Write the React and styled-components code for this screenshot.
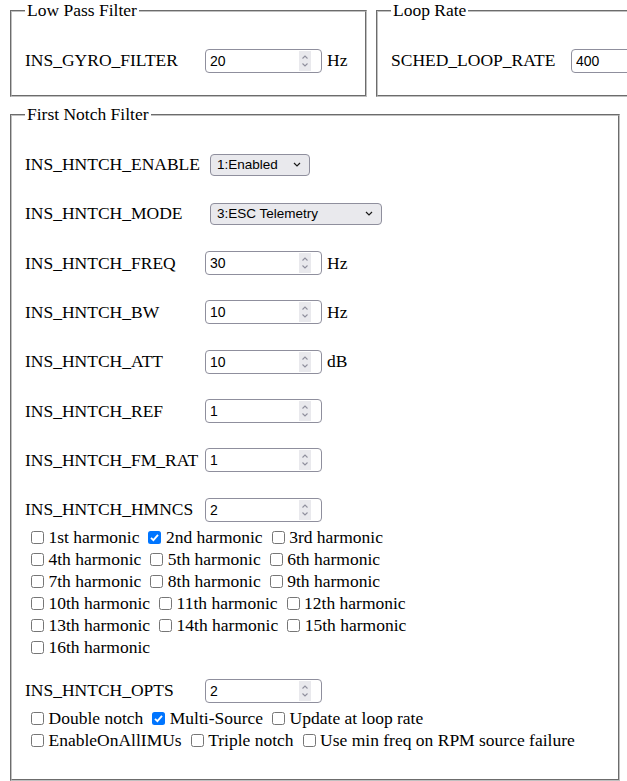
import React from "react"
import styled, { createGlobalStyle } from "styled-components"

const GlobalStyle = createGlobalStyle`
  html, body {
    margin: 0;
    padding: 0;
    background: #fff;
    overflow: hidden;
  }
  body {
    font-family: "Liberation Serif", "Times New Roman", serif;
    font-size: 17.5px;
    color: #000;
  }
`

const Page = styled.div`
  width: 627px;
  overflow: hidden;
  padding: 1px 0 0 8px;
  box-sizing: border-box;
`

const TopRow = styled.div`
  display: flex;
  gap: 5px;
  width: 900px;
`

const Group = styled.fieldset`
  box-sizing: border-box;
  width: ${p => p.$width}px;
  margin: ${p => p.$top || 0}px 2px 0;
  padding: 3px 12px ${p => p.$bottom}px 13px;
  border: 2px groove #c0c0c0;
  min-width: 0;
  flex: none;
`

const Legend = styled.legend`
  padding: 0 2px;
  line-height: 19.5px;
`

const Row = styled.div`
  display: flex;
  align-items: center;
  height: 24px;
  margin-top: ${p => p.$gap ?? 25.3}px;
  white-space: nowrap;
`

const Label = styled.span`
  width: 180px;
  flex: none;
`

const Unit = styled.span`
  margin-left: 5px;
`

const NumberBox = styled.div`
  display: flex;
  align-items: center;
  box-sizing: border-box;
  width: 117px;
  height: 24px;
  padding: 0 10px 0 4px;
  border: 1px solid #8f8f9d;
  border-radius: 4px;
  background: #fff;
  flex: none;
`

const NumberText = styled.input`
  flex: 1;
  min-width: 0;
  border: 0;
  outline: 0;
  padding: 0;
  background: transparent;
  color: #000;
  font: 14px "Liberation Sans", Arial, sans-serif;
`

const Spin = styled.span`
  display: flex;
  width: 12px;
  height: 20px;
  background: #e9e9ed;
  flex: none;
`

const SelectBox = styled.div`
  display: flex;
  align-items: center;
  justify-content: space-between;
  box-sizing: border-box;
  width: ${p => p.$width}px;
  height: 22px;
  margin-left: 5px;
  padding: 0 8px 0 6px;
  border: 1px solid #8f8f9d;
  border-radius: 4px;
  background: #e9e9ed;
  font: 13.5px "Liberation Sans", Arial, sans-serif;
  color: #000;
`

const CheckLine = styled.div`
  display: flex;
  align-items: center;
  height: 22px;
  padding-left: 6px;
  margin-top: ${p => p.$gap || 0}px;
  white-space: nowrap;
`

const CheckItem = styled.label`
  display: flex;
  align-items: center;
  gap: 4.5px;
  margin-right: 9px;
`

const Box = styled.span`
  display: flex;
  align-items: center;
  justify-content: center;
  box-sizing: border-box;
  width: 13px;
  height: 13px;
  border-radius: 2.5px;
  border: ${p => (p.$on ? "none" : "1px solid #767676")};
  background: ${p => (p.$on ? "#0075ff" : "#fff")};
`

function Spinner() {
  return (
    <Spin>
      <svg width="12" height="20" viewBox="0 0 12 20">
        <path d="M3.5 7.5 L6 5 L8.5 7.5" fill="none" stroke="#8f8f9d" strokeWidth="1.1" />
        <path d="M3.5 12.5 L6 15 L8.5 12.5" fill="none" stroke="#8f8f9d" strokeWidth="1.1" />
      </svg>
    </Spin>
  )
}

function NumberField({ value }) {
  return (
    <NumberBox>
      <NumberText type="text" defaultValue={value} />
      <Spinner />
    </NumberBox>
  )
}

function Select({ value, width }) {
  return (
    <SelectBox $width={width}>
      <span>{value}</span>
      <svg width="8" height="5" viewBox="0 0 8 5">
        <path d="M1 1 L4 4 L7 1" fill="none" stroke="#1a1a1a" strokeWidth="1.2" />
      </svg>
    </SelectBox>
  )
}

function Check({ on, children }) {
  return (
    <CheckItem>
      <Box $on={on}>
        {on && (
          <svg width="13" height="13" viewBox="0 0 13 13">
            <path d="M3 6.8 L5.4 9.2 L10 3.8" fill="none" stroke="#fff" strokeWidth="1.8" />
          </svg>
        )}
      </Box>
      <span>{children}</span>
    </CheckItem>
  )
}

const ordinal = n => {
  if (n % 100 >= 11 && n % 100 <= 13) return n + "th"
  return n + (["th", "st", "nd", "rd"][n % 10] || "th")
}

const harmonicLines = [[1, 2, 3], [4, 5, 6], [7, 8, 9], [10, 11, 12], [13, 14, 15], [16]]
const harmonicsOn = [2]

const optionLines = [
  [["Double notch", false], ["Multi-Source", true], ["Update at loop rate", false]],
  [["EnableOnAllIMUs", false], ["Triple notch", false], ["Use min freq on RPM source failure", false]],
]

const numberRows = [
  ["INS_HNTCH_FREQ", "30", "Hz"],
  ["INS_HNTCH_BW", "10", "Hz"],
  ["INS_HNTCH_ATT", "10", "dB"],
  ["INS_HNTCH_REF", "1"],
  ["INS_HNTCH_FM_RAT", "1"],
  ["INS_HNTCH_HMNCS", "2"],
]

export default function App() {
  return (
    <Page>
      <GlobalStyle />
      <TopRow>
        <Group $width={357} $bottom={22}>
          <Legend>Low Pass Filter</Legend>
          <Row>
            <Label>INS_GYRO_FILTER</Label>
            <NumberField value="20" />
            <Unit>Hz</Unit>
          </Row>
        </Group>
        <Group $width={357} $bottom={22}>
          <Legend>Loop Rate</Legend>
          <Row>
            <Label>SCHED_LOOP_RATE</Label>
            <NumberField value="400" />
          </Row>
        </Group>
      </TopRow>

      <Group $width={610} $top={8} $bottom={27}>
        <Legend>First Notch Filter</Legend>
        <Row>
          <Label>INS_HNTCH_ENABLE</Label>
          <Select value="1:Enabled" width={100} />
        </Row>
        <Row>
          <Label>INS_HNTCH_MODE</Label>
          <Select value="3:ESC Telemetry" width={172} />
        </Row>
        {numberRows.map(([name, value, unit]) => (
          <Row key={name}>
            <Label>{name}</Label>
            <NumberField value={value} />
            {unit && <Unit>{unit}</Unit>}
          </Row>
        ))}
        {harmonicLines.map((line, i) => (
          <CheckLine key={i} $gap={i === 0 ? 5 : 0}>
            {line.map(n => (
              <Check key={n} on={harmonicsOn.includes(n)}>
                {ordinal(n)} harmonic
              </Check>
            ))}
          </CheckLine>
        ))}
        <Row $gap={20}>
          <Label>INS_HNTCH_OPTS</Label>
          <NumberField value="2" />
        </Row>
        {optionLines.map((line, i) => (
          <CheckLine key={i} $gap={i === 0 ? 5 : 0}>
            {line.map(([text, on]) => (
              <Check key={text} on={on}>
                {text}
              </Check>
            ))}
          </CheckLine>
        ))}
      </Group>
    </Page>
  )
}
